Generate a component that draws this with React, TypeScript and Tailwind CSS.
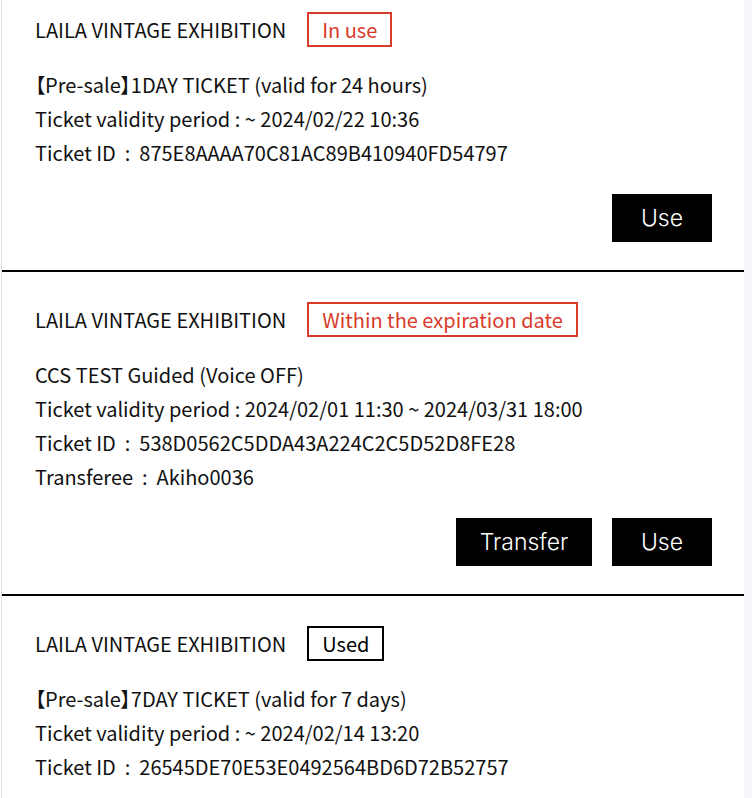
import React from "react";

type Ticket = {
  status: string;
  tone: "red" | "black";
  name: string;
  presale?: boolean;
  period: string;
  id: string;
  transferee?: string;
  transfer?: boolean;
  use?: boolean;
};

const tickets: Ticket[] = [
  {
    status: "In use",
    tone: "red",
    presale: true,
    name: "1DAY TICKET (valid for 24 hours)",
    period: "~ 2024/02/22 10:36",
    id: "875E8AAAA70C81AC89B410940FD54797",
    use: true,
  },
  {
    status: "Within the expiration date",
    tone: "red",
    name: "CCS TEST Guided (Voice OFF)",
    period: "2024/02/01 11:30 ~ 2024/03/31 18:00",
    id: "538D0562C5DDA43A224C2C5D52D8FE28",
    transferee: "Akiho0036",
    transfer: true,
    use: true,
  },
  {
    status: "Used",
    tone: "black",
    presale: true,
    name: "7DAY TICKET (valid for 7 days)",
    period: "~ 2024/02/14 13:20",
    id: "26545DE70E53E0492564BD6D72B52757",
  },
];

const TicketCard = ({ t, first }: { t: Ticket; first: boolean }) => {
  const badge =
    t.tone === "red"
      ? "border-[#d83a2c] text-[#d83a2c]"
      : "border-black text-black";
  return (
    <div
      className={`${first ? "pt-3" : "pt-[30px] border-t-2 border-black"} pl-[33px] pr-8 pb-7`}
    >
      <div className="flex items-center h-[35px]">
        <span className="text-[20px] text-[#111]">LAILA VINTAGE EXHIBITION</span>
        <span
          className={`ml-[21px] h-[35px] px-[13px] border-2 flex items-center text-[20px] ${badge}`}
        >
          {t.status}
        </span>
      </div>
      <div className="mt-[21px] text-[20px] leading-[34px] text-[#111] whitespace-pre">
        <div>
          {t.presale && (
            <span className="[font-feature-settings:'palt']">【Pre-sale】</span>
          )}
          {t.name}
        </div>
        <div>Ticket validity period : {t.period}</div>
        <div>Ticket ID  :  {t.id}</div>
        {t.transferee && <div>Transferee  :  {t.transferee}</div>}
      </div>
      {(t.transfer || t.use) && (
        <div className="mt-6 flex justify-end gap-5">
          {t.transfer && (
            <button className="h-12 w-[136px] bg-black text-white text-[23px] font-light font-['Inter',sans-serif]">
              Transfer
            </button>
          )}
          {t.use && (
            <button className="h-12 w-[100px] bg-black text-white text-[23px] font-light font-['Inter',sans-serif]">
              Use
            </button>
          )}
        </div>
      )}
    </div>
  );
};

export default function App() {
  return (
    <div className="w-[752px] h-[798px] overflow-hidden bg-[#f5f7fc] flex font-['Noto_Sans_CJK_JP','Noto_Sans',sans-serif]">
      <div className="w-[744px] bg-white pl-px">
        <div className="h-full border-l border-[#dcdcdc]">
          {tickets.map((t, i) => (
            <TicketCard key={i} t={t} first={i === 0} />
          ))}
        </div>
      </div>
    </div>
  );
}
